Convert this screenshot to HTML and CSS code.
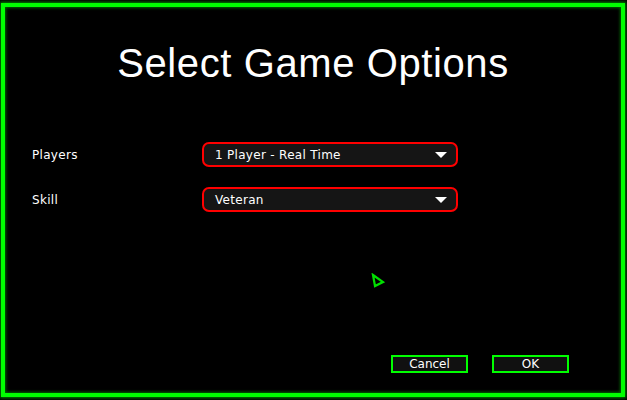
FILE: index.html
```html
<!DOCTYPE html>
<html>
<head>
<meta charset="utf-8">
<link rel="stylesheet" href="styles.css">
</head>
<body>
<div class="frame">
  <h1 class="title">Select Game Options</h1>
  <div class="rows">
    <div class="row">
      <span class="label">Players</span>
      <div class="select"><span>1 Player - Real Time</span><span class="arrow"></span></div>
    </div>
    <div class="row">
      <span class="label">Skill</span>
      <div class="select"><span>Veteran</span><span class="arrow"></span></div>
    </div>
  </div>
  <div class="buttons">
    <div class="btn">Cancel</div>
    <div class="btn">OK</div>
  </div>
  <svg class="cursor" width="16" height="16" viewBox="0 0 16 16"><polygon points="3,2 13,9 5,13" fill="none" stroke="#00e000" stroke-width="2.2" stroke-linejoin="miter"/></svg>
</div>
</body>
</html>
```
FILE: styles.css
```css
html, body {
  margin: 0;
  padding: 0;
  background: #000;
  width: 627px;
  height: 400px;
  overflow: hidden;
}
.frame {
  position: relative;
  box-sizing: border-box;
  margin: 3px 2px 0 1px;
  height: 394px;
  border: 4px solid #00ff00;
  box-shadow: 0 0 3px 1px #008800, inset 0 0 3px 1px #006600;
  display: flex;
  flex-direction: column;
  font-family: "DejaVu Sans", sans-serif;
  color: #fff;
}
.title {
  margin: 32px 0 0 0;
  text-align: center;
  font-family: "Liberation Sans", sans-serif;
  font-weight: normal;
  font-size: 40px;
  line-height: 48px;
  letter-spacing: 0.6px;
}
.rows {
  margin-top: 55px;
  display: flex;
  flex-direction: column;
  gap: 20px;
}
.row {
  display: flex;
  align-items: center;
  padding-left: 27px;
}
.label {
  width: 170px;
  font-size: 12px;
  letter-spacing: 0.3px;
}
.select {
  box-sizing: border-box;
  width: 256px;
  height: 25px;
  border: 2px solid #ff0000;
  border-radius: 7px;
  background: #151515;
  display: flex;
  align-items: center;
  justify-content: space-between;
  padding: 0 9px 0 11px;
  font-size: 12px;
  letter-spacing: 0.3px;
}
.arrow {
  width: 0;
  height: 0;
  border-left: 6px solid transparent;
  border-right: 6px solid transparent;
  border-top: 6px solid #fff;
}
.buttons {
  margin-top: auto;
  margin-bottom: 20px;
  display: flex;
  gap: 24px;
  padding-left: 386px;
}
.btn {
  box-sizing: border-box;
  width: 77px;
  height: 18px;
  border: 2px solid #00ff00;
  background: #111;
  font-size: 12px;
  line-height: 14px;
  text-align: center;
}
.cursor {
  position: absolute;
  left: 365px;
  top: 266px;
}
```
